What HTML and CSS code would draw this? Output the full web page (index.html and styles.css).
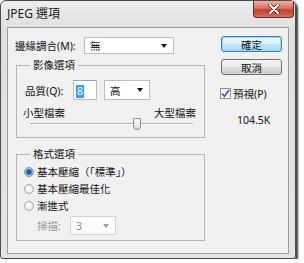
FILE: index.html
```html
<!DOCTYPE html>
<html lang="zh-Hant">
<head>
    <meta charset="UTF-8">
    <title>JPEG 選項</title>
    <link rel="stylesheet" href="styles.css">
</head>
<body>
    <!-- Janela do diálogo -->
    <div class="window">
        <div class="titlebar">
            <span class="title">JPEG 選項</span>
            <div class="close-btn">
                <svg width="12" height="10" viewBox="0 0 12 10">
                    <path d="M2 1 L10 9 M10 1 L2 9" stroke="#5a1a14" stroke-width="3.4" stroke-linecap="round"/>
                    <path d="M2 1 L10 9 M10 1 L2 9" stroke="#fff" stroke-width="2" stroke-linecap="round"/>
                </svg>
            </div>
        </div>

        <div class="client">
            <!-- Coluna principal -->
            <div class="main-col">
                <div class="matte-row">
                    <span class="matte-label">邊緣調合(M):</span>
                    <div class="dropdown matte-select"><span>無</span><i class="arrow"></i></div>
                </div>

                <fieldset class="group image-group">
                    <legend>影像選項</legend>
                    <div class="quality-row">
                        <span class="quality-label">品質(Q):</span>
                        <div class="num-input"><span class="selected-text">8</span></div>
                        <div class="dropdown quality-select"><span>高</span><i class="arrow"></i></div>
                    </div>
                    <div class="size-labels">
                        <span>小型檔案</span>
                        <span>大型檔案</span>
                    </div>
                    <div class="slider">
                        <div class="track"></div>
                        <div class="thumb"></div>
                    </div>
                </fieldset>

                <fieldset class="group format-group">
                    <legend>格式選項</legend>
                    <div class="radio-row"><span class="radio checked"></span>基本壓縮（「標準」）</div>
                    <div class="radio-row"><span class="radio"></span>基本壓縮最佳化</div>
                    <div class="radio-row"><span class="radio"></span>漸進式</div>
                    <div class="scan-row">
                        <span class="scan-label">掃描:</span>
                        <div class="dropdown scan-select"><span>3</span><i class="arrow"></i></div>
                    </div>
                </fieldset>
            </div>

            <!-- Coluna de botões -->
            <div class="side-col">
                <button class="btn btn-default">確定</button>
                <button class="btn">取消</button>
                <div class="preview-row">
                    <span class="checkbox">
                        <svg width="9" height="9" viewBox="0 0 9 9">
                            <path d="M1 4.5 L3.5 7.5 L8 1" fill="none" stroke="#3d5a98" stroke-width="1.6"/>
                        </svg>
                    </span>
                    預視(P)
                </div>
                <div class="file-size">104.5K</div>
            </div>
        </div>
    </div>
</body>
</html>
```

FILE: styles.css
```css
/* Estilo geral */
* {
    box-sizing: border-box;
}

body {
    margin: 0;
    background: #fff;
    font-family: "Noto Sans", "Noto Sans CJK TC", sans-serif;
    font-size: 10.5px;
    color: #111;
}

/* Janela */
.window {
    width: 296px;
    height: 259px;
    border: 1px solid #4a4a4a;
    border-radius: 6px 6px 3px 3px;
    background: linear-gradient(#ededed, #dedede 30px, #e4e4e4);
    box-shadow: 2px 2px 2px rgba(0, 0, 0, 0.75);
    display: flex;
    flex-direction: column;
}

.titlebar {
    flex: none;
    height: 26px;
    display: flex;
    justify-content: space-between;
    align-items: flex-start;
    padding-left: 6px;
}

.title {
    font-size: 12px;
    line-height: 26px;
    color: #1a1a1a;
}

.close-btn {
    width: 41px;
    height: 17px;
    margin-right: 1px;
    border: 1px solid #6e2820;
    border-top: none;
    border-radius: 0 0 4px 4px;
    background: linear-gradient(#eab0a4, #d9735f 45%, #c0402c 55%, #d66e58);
    display: flex;
    align-items: center;
    justify-content: center;
}

.client {
    flex: 1;
    margin: 0 6px 4px 6px;
    border: 1px solid #9c9c9c;
    background: #f0f0f0;
    display: flex;
}

/* Coluna principal */
.main-col {
    width: 198px;
    padding: 9px 0 0 8px;
}

.matte-row {
    display: flex;
    align-items: center;
    height: 17px;
}

.matte-label {
    width: 69px;
    margin-left: -1px;
}

/* Dropdowns */
.dropdown {
    display: flex;
    align-items: center;
    justify-content: space-between;
    background: #fff;
    border: 1px solid #b8bcc4;
    padding: 0 6px 0 5px;
}

.arrow {
    width: 0;
    height: 0;
    border-left: 3.5px solid transparent;
    border-right: 3.5px solid transparent;
    border-top: 4px solid #111;
}

.matte-select {
    width: 90px;
    height: 17px;
}

/* Grupos */
.group {
    width: 189px;
    margin: 0;
    border: 1px solid #b4b4b4;
    padding: 0 8px;
}

.group legend {
    margin-left: 5px;
    padding: 0 3px;
    line-height: 14px;
}

.image-group {
    margin-top: 4px;
    padding-bottom: 7px;
}

.quality-row {
    display: flex;
    align-items: center;
    margin-top: 8px;
    height: 20px;
}

.quality-label {
    width: 48px;
}

.num-input {
    width: 24px;
    height: 20px;
    background: #fff;
    border: 1px solid #b8bcc4;
    border-top-color: #9a9ea6;
    padding: 3px 0 0 2px;
    margin-right: 7px;
}

.selected-text {
    display: inline-block;
    background: #3399ff;
    color: #fff;
    line-height: 13px;
    padding: 0 1px;
}

.quality-select {
    width: 46px;
    height: 20px;
}

.size-labels {
    display: flex;
    justify-content: space-between;
    margin: 6px 0 0 -2px;
    line-height: 14px;
}

.slider {
    position: relative;
    height: 12px;
    margin: -2px 3px 0 5px;
}

.track {
    position: absolute;
    left: 0;
    right: 0;
    top: 5px;
    height: 2px;
    border-top: 1px solid #b0b0b0;
    border-bottom: 1px solid #fff;
}

.thumb {
    position: absolute;
    left: 103px;
    top: 0;
    width: 8px;
    height: 12px;
    border: 1px solid #8e8e8e;
    border-radius: 1px 1px 4px 4px;
    background: linear-gradient(#fdfdfd, #dcdcdc);
}

/* Grupo de formato */
.format-group {
    margin-top: 9px;
    padding-bottom: 5px;
}

.radio-row {
    display: flex;
    align-items: center;
    height: 17px;
}

.radio-row:first-of-type {
    margin-top: 2px;
}

.radio {
    width: 10px;
    height: 10px;
    margin: 0 3px 0 -1px;
    border-radius: 50%;
    border: 1px solid #a3a3a3;
    background: radial-gradient(circle at 40% 40%, #fff, #dedede);
}

.radio.checked {
    background: radial-gradient(circle, #1d5fae 0 2px, #5d9be0 3px, #dfe9f5 4px);
    border-color: #7d8ea3;
}

.scan-row {
    display: flex;
    align-items: center;
    margin-top: 2px;
    height: 19px;
    color: #9a9a9a;
}

.scan-label {
    width: 45px;
    padding-left: 12px;
}

.scan-select {
    width: 46px;
    height: 19px;
    border-color: #d2d2d2;
    background: #fbfbfb;
    color: #8a8a8a;
}

.scan-select .arrow {
    border-top-color: #9a9a9a;
}

/* Coluna de botões */
.side-col {
    padding: 8px 0 0 15px;
    display: flex;
    flex-direction: column;
    align-items: flex-start;
}

.btn {
    width: 61px;
    height: 16px;
    padding: 0;
    font-family: inherit;
    font-size: 10.5px;
    color: #111;
    border: 1px solid #707070;
    border-radius: 3px;
    background: linear-gradient(#f3f3f3, #ebebeb 48%, #dddddd 52%, #cfcfcf);
}

.btn + .btn {
    margin-top: 7px;
}

.btn-default {
    border-color: #3c7fb1;
    background: linear-gradient(#eaf6fd, #d9f0fc 48%, #bee6fd 52%, #a7d9f5);
    box-shadow: inset 0 0 0 1px #9ed4f2;
}

.preview-row {
    display: flex;
    align-items: center;
    margin-top: 11px;
    height: 15px;
}

.checkbox {
    width: 11px;
    height: 11px;
    margin: 0 2px 0 -1px;
    border: 1px solid #8e8f8f;
    background: linear-gradient(#ececec, #fff);
    display: flex;
    align-items: center;
    justify-content: center;
}

.file-size {
    margin: 12px 0 0 16px;
    line-height: 14px;
}
```
